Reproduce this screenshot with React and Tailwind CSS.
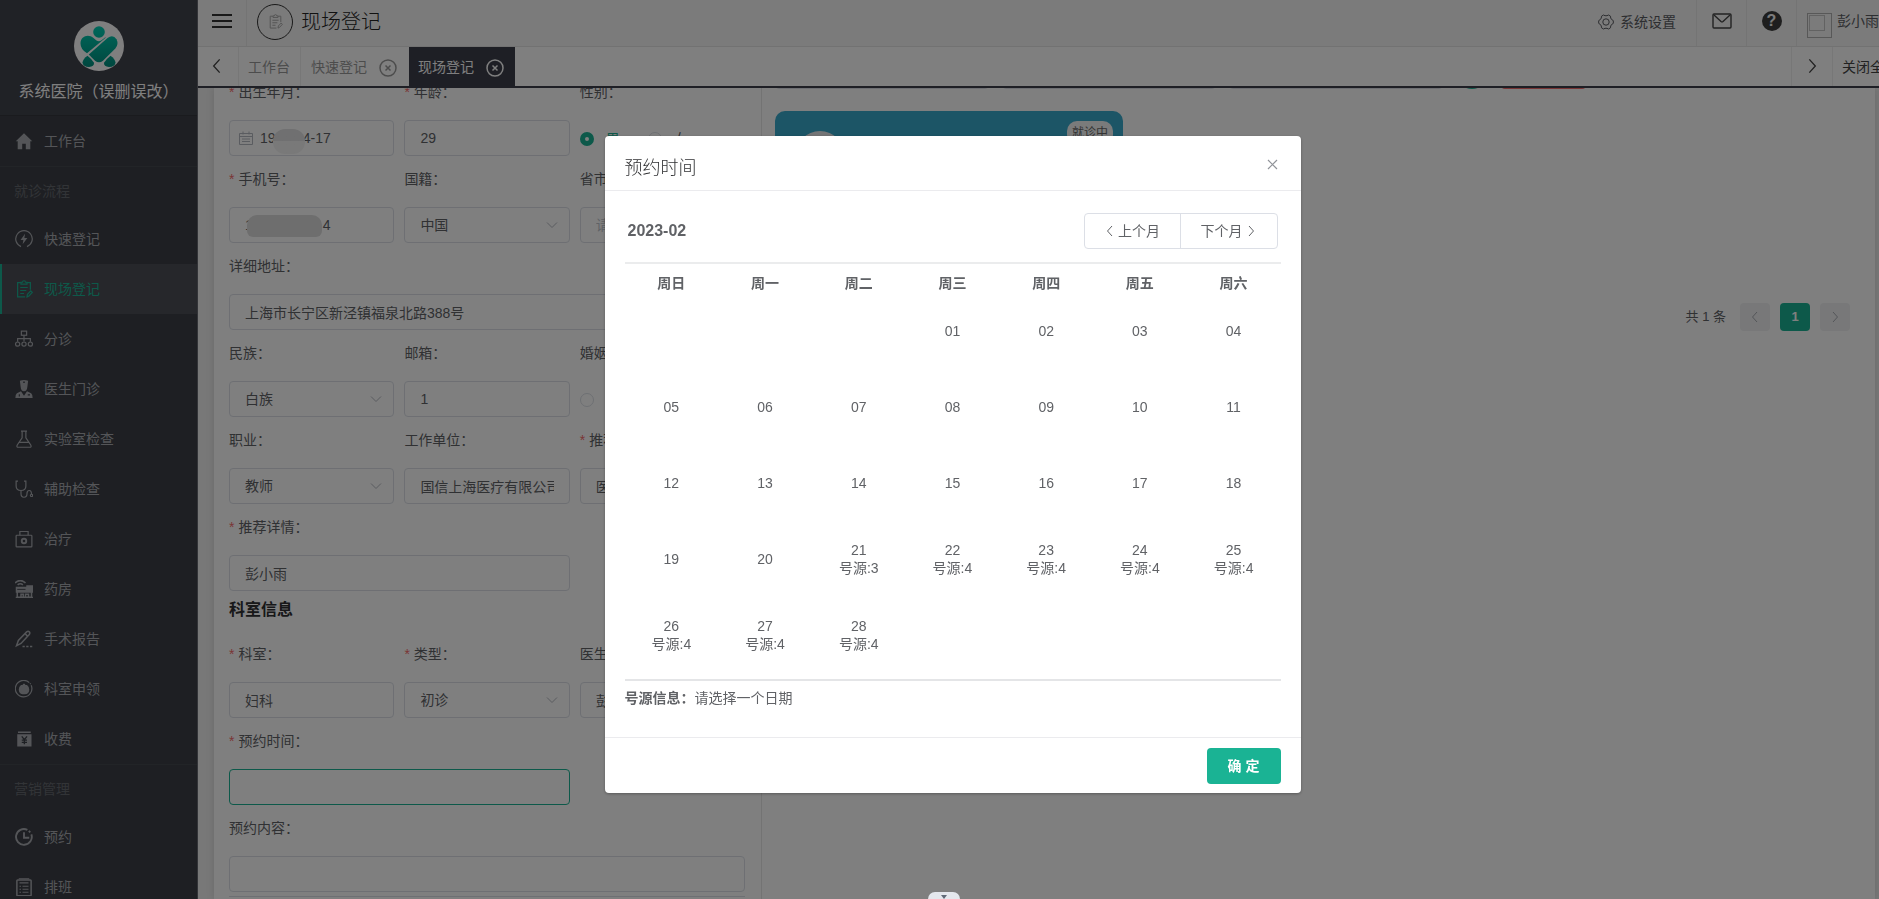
import { useState } from 'react';

const GROUPS = [
  { title: '', items: [{ label: '工作台', icon: 'home' }] },
  {
    title: '就诊流程',
    items: [
      { label: '快速登记', icon: 'bolt' },
      { label: '现场登记', icon: 'clipboard' },
      { label: '分诊', icon: 'tree' },
      { label: '医生门诊', icon: 'doctor' },
      { label: '实验室检查', icon: 'flask' },
      { label: '辅助检查', icon: 'stethoscope' },
      { label: '治疗', icon: 'kit' },
      { label: '药房', icon: 'pharmacy' },
      { label: '手术报告', icon: 'pen' },
      { label: '科室申领', icon: 'apply' },
      { label: '收费', icon: 'fee' },
    ],
  },
  {
    title: '营销管理',
    items: [
      { label: '预约', icon: 'clock' },
      { label: '排班', icon: 'schedule' },
    ],
  },
];

const WEEKDAYS = ['周日', '周一', '周二', '周三', '周四', '周五', '周六'];

const WEEKS = [
  ['', '', '', '01', '02', '03', '04'],
  ['05', '06', '07', '08', '09', '10', '11'],
  ['12', '13', '14', '15', '16', '17', '18'],
  ['19', '20', '21', '22', '23', '24', '25'],
  ['26', '27', '28', '', '', '', ''],
];

const SLOTS = { 21: 3, 22: 4, 23: 4, 24: 4, 25: 4, 26: 4, 27: 4, 28: 4 };

const ICONS = {
  home: <path fill="currentColor" stroke="none" d="M12 1.5 1 12.2h2.6V23h6v-7.2h4.8V23h6V12.2H23z" />,
  bolt: (
    <>
      <path d="M8 22.2A11 11 0 1 1 16 22.2M3.5 18.5a11 11 0 0 0 2 2" />
      <path fill="currentColor" stroke="none" d="m13.4 5-6 8.2h3.8L10.2 19l6.3-8.4h-4z" />
    </>
  ),
  clipboard: (
    <>
      <path d="M8 3.5H3.5v19h10M16 3.5h4.5V13" />
      <path d="M8 5.5h8V3h-2a2 2 0 0 0-4 0H8zM7 10h10M7 14h8M7 18h5" />
      <path d="m16 22.5.6-3.4 4.4-4.6 2 2-4.4 4.8z" />
    </>
  ),
  tree: (
    <>
      <rect x="8.5" y="1.5" width="7" height="5.5" />
      <path d="M12 7v8M3.5 15.500v-4h17v4" />
      <circle cx="3.500" cy="18.800" r="2.800" />
      <circle cx="12" cy="18.800" r="2.800" />
      <circle cx="20.500" cy="18.800" r="2.800" />
    </>
  ),
  doctor: (
    <g fill="currentColor" stroke="none">
      <path d="M6.500 1Q12-.8 17.500 1l-1 8q-.5 6-4.500 6T7.500 9z" />
      <path d="M8 15 2.500 17.500Q.5 19 .5 24h23q0-5-2-6.500L16 15l-4 6z" />
      <path fill="#3d4048" d="M11 2h2v2h-2zM5 19h1.500v3H5zM17 19h3v1.500h-3z" />
    </g>
  ),
  flask: <path d="M8 1.500h8M9.500 1.500v9L3 20q-1.500 3 1.500 3h15q3 0 1.500-3l-6.500-9.500v-9M6.500 16.500h11" />,
  stethoscope: (
    <>
      <path d="M4 1.500H1.500V8q0 6 6.500 6t6.500-6V1.500H12" />
      <path d="M8 14v4q0 5 4 5t4-5q0-4 3-4t3 5" />
      <circle cx="22" cy="20.500" r="1.500" />
    </>
  ),
  kit: (
    <>
      <rect x="1.500" y="7" width="21" height="15.500" rx="1" />
      <path d="M6.500 7V2h11v5" />
      <circle cx="12" cy="14.700" r="3" strokeWidth="2.500" />
    </>
  ),
  pharmacy: (
    <>
      <path d="M0 4Q7-2.500 14 4M3.500 6.500q3.500-3 7 0" strokeWidth="2.200" />
      <path fill="currentColor" stroke="none" d="M1 9h14V7h9v10H1z" />
      <path d="M3 16v7h19v-7M8 23v-4h3v4M14 23v-4h4v4M1 23.200h23" strokeWidth="2" />
      <path stroke="#3d4048" d="M3 12.500h11" strokeWidth="1.200" />
    </>
  ),
  pen: (
    <>
      <path d="m2 21 2.500-7L15.500 2.500q2-1.500 3.500 0t0 3.500L8 18zM13.500 5l3.500 3.500" strokeWidth="2" />
      <path d="M10 22h3M15 22h3M20 22h3" strokeWidth="2" />
    </>
  ),
  apply: (
    <>
      <path d="M19 3.500A11 11 0 1 0 21.500 7M20 4.500l1 1" />
      <path fill="currentColor" stroke="none" d="M8 6.500h2l1-1.500h2l1 1.500h2q3 2 3 6 0 6-6 6.500h-3q-5-1-5-6.500 0-4 3-6z" />
    </>
  ),
  fee: (
    <>
      <path fill="currentColor" stroke="none" d="M4 2h17v2H4zM3 5.500h19V22H3z" />
      <path stroke="#3d4048" strokeWidth="1.800" d="m9 8.500 3.500 4.500L16 8.500M12.500 13v6M9 13.500h7M9 16.500h7" />
    </>
  ),
  clock: (
    <>
      <path d="M16.500 2.500A10.500 10.500 0 1 0 21.800 8.500M18.500 3.800l1.800 2" strokeWidth="2.500" />
      <path d="M12 5.500V13h7" strokeWidth="2.500" />
    </>
  ),
  schedule: (
    <>
      <rect x="2.500" y="2.500" width="19" height="21" rx="1" strokeWidth="2" />
      <path d="M5 1h14M6 6.500h12" />
      <path d="M6 11h2M10 11h8M6 15h2M10 15h8M6 19h2M10 19h8" />
    </>
  ),
};

function Icon({ name, className }) {
  return (
    <svg viewBox="0 0 24 24" className={className} fill="none" stroke="currentColor" strokeWidth="1.6" aria-hidden="true">
      {ICONS[name]}
    </svg>
  );
}

function Chevron({ dir, className }) {
  const paths = { left: 'M16 2 7 12l9 10', right: 'm8 2 9 10-9 10', down: 'm2 7 10 10L22 7' };
  return (
    <svg viewBox="0 0 24 24" className={className} fill="none" stroke="currentColor" strokeWidth="2" aria-hidden="true">
      <path d={paths[dir]} />
    </svg>
  );
}

function Logo() {
  return (
    <svg viewBox="0 0 50 50" className="h-[50px] w-[50px]" aria-hidden="true">
      <defs>
        <linearGradient id="logo-fill" gradientUnits="userSpaceOnUse" x1="0" y1="5" x2="0" y2="46">
          <stop offset="0" stopColor="#00d0b6" />
          <stop offset="1" stopColor="#008f7e" />
        </linearGradient>
      </defs>
      <circle cx="25" cy="25" r="25" fill="#fff" />
      <g fill="url(#logo-fill)">
        <circle cx="25" cy="11" r="5.800" />
        <path d="M6.500 22.500c0-7.500 8-10 13-5.500l3 2.600q2.500 1.600 5-.4l3.500-2.700q1.500-.8.300.5L13 32.300q-6.500-4-6.500-9.800z" />
        <path d="M14.800 33.500 33.500 17q5.500-4 9 1.200 2.500 5-1.200 9.300L29 39.700q-4 3.300-8 0z" />
        <path d="M13.500 34.800q4.500 3.500 6.500 7 .3 4-5 4.200-6-.2-6.500-4.500.5-3.500 5-6.700z" />
        <path d="M36.500 34.800q-4.500 3.500-6.500 7-.3 4 5 4.200 6-.2 6.500-4.500-.5-3.500-5-6.700z" />
      </g>
    </svg>
  );
}

function Sidebar() {
  return (
    <aside className="w-[198px] shrink-0 overflow-hidden border-r border-[#666870] bg-[#3c3f46] text-[#a9abb1]">
      <div className="flex h-[116px] flex-col items-center border-b border-[#34373d] bg-[#41444c] pt-[21px]">
        <Logo />
        <div className="mt-[9px] text-base leading-6 whitespace-nowrap text-white">系统医院（误删误改）</div>
      </div>
      <nav>
        {GROUPS.map((group) => (
          <div key={group.title}>
            {group.title && (
              <div className="flex h-12 items-center border-t border-[#45484f] pl-[14px] text-sm text-[#65686f]">
                {group.title}
              </div>
            )}
            {group.items.map((item) => {
              const active = item.label === '现场登记';
              return (
                <a
                  key={item.label}
                  href="#"
                  className={
                    active
                      ? 'flex h-[50px] items-center gap-[11px] border-l-2 border-[#1ab394] bg-[#4c4f56] pl-[13px] text-sm text-[#1ab394]'
                      : 'flex h-[50px] items-center gap-[11px] pl-[15px] text-sm'
                  }
                >
                  <Icon name={item.icon} className="h-[18px] w-[18px]" />
                  {item.label}
                </a>
              );
            })}
          </div>
        ))}
      </nav>
    </aside>
  );
}

function Header() {
  return (
    <header className="flex h-[47px] border-b border-[#e4e4e4] bg-[#f6f6f6] text-sm text-[#5a5c62]">
      <button type="button" aria-label="菜单" className="flex w-[49px] items-center justify-center border-r border-[#e9e9e9] pb-[5px]">
        <svg viewBox="0 0 20 14" className="h-[14px] w-5" stroke="#333" strokeWidth="2">
          <path d="M0 1h20M0 7h20M0 13h20" />
        </svg>
      </button>
      <div className="flex flex-1 items-center gap-2 pb-[3px] pl-[10px]">
        <span className="flex h-9 w-9 items-center justify-center rounded-full border border-[#333] text-[#aaa]">
          <Icon name="clipboard" className="h-[15px] w-[15px]" />
        </span>
        <h1 className="text-xl font-light text-[#222]">现场登记</h1>
      </div>
      <a href="#" className="flex items-center gap-[6px] border-r border-[#e9e9e9] pr-5 pb-[3px]">
        <svg viewBox="0 0 16 16" className="h-4 w-4" fill="none" stroke="currentColor" aria-hidden="true">
          <path d="M5.500 1 7 1.700h2l1.500-.7 2 1.200.2 1.800 1 1.600 1.600 1v2.800l-1.600 1-1 1.600-.2 1.800-2 1.200-1.500-.7H7L5.500 15l-2-1.200-.2-1.800-1-1.600-1.600-1V6.600l1.600-1 1-1.600.2-1.800z" />
          <circle cx="8" cy="8" r="3.200" />
        </svg>
        系统设置
      </a>
      <button type="button" aria-label="消息" className="flex w-[50px] items-center justify-center border-r border-[#e9e9e9] pb-1">
        <svg viewBox="0 0 20 16" className="h-4 w-5" fill="none" stroke="#444" strokeWidth="1.400">
          <rect x="1" y="1" width="18" height="14" rx="1" />
          <path d="m2 2 7 6.500q1 .8 2 0L18 2" />
        </svg>
      </button>
      <button type="button" aria-label="帮助" className="flex w-[50px] items-center justify-center border-r border-[#e9e9e9] pb-[5px]">
        <span className="flex h-5 w-5 items-center justify-center rounded-full bg-[#3c3c3c] text-base leading-5 font-bold text-[#f6f6f6]">?</span>
      </button>
      <a href="#" className="flex w-[82px] gap-[5px] overflow-hidden pt-[11px] pl-[10px] leading-5 whitespace-nowrap">
        <span className="mt-[2px] h-[25px] w-[25px] shrink-0 border border-[#b0b0b0] p-px">
          <span className="block h-4 w-4 border border-[#c4c4c4]" />
        </span>
        彭小雨
      </a>
    </header>
  );
}

function CloseMark() {
  return (
    <svg viewBox="0 0 18 18" className="h-[18px] w-[18px]" fill="none" stroke="currentColor" strokeWidth="1.500">
      <circle cx="9" cy="9" r="8" />
      <path d="m6.500 6.500 5 5M11.500 6.500l-5 5" />
    </svg>
  );
}

function TabBar() {
  return (
    <div className="flex h-[41px] border-b-2 border-[#3c3f4a] bg-white text-sm text-[#999]">
      <button type="button" aria-label="向左" className="flex w-[41px] items-center justify-center border-r border-[#eee] pr-[3px] pb-[2px] text-[#444]">
        <Chevron dir="left" className="h-4 w-4" />
      </button>
      <a href="#" className="flex items-center border-r border-[#eee] pr-[10px] pl-[9px]">工作台</a>
      <span className="flex items-center gap-3 pr-3 pl-[10px]">
        <a href="#">快速登记</a>
        <button type="button" aria-label="关闭快速登记" className="pt-[2px]"><CloseMark /></button>
      </span>
      <span className="flex items-center gap-3 bg-[#3c3f4a] pr-[11px] pl-[9px] text-white">
        <a href="#">现场登记</a>
        <button type="button" aria-label="关闭现场登记" className="pt-[2px]"><CloseMark /></button>
      </span>
      <div className="flex-1" />
      <button type="button" aria-label="向右" className="flex w-[42px] items-center justify-center border-x border-[#eee] pb-[2px] text-[#444]">
        <Chevron dir="right" className="h-4 w-4" />
      </button>
      <button type="button" className="w-[46px] overflow-hidden pl-[9px] text-left whitespace-nowrap text-[#444]">关闭全部</button>
    </div>
  );
}

function FieldLabel({ htmlFor, required, children }) {
  return (
    <label htmlFor={htmlFor} className="flex h-[51px] items-center pb-[5px] whitespace-nowrap">
      {required && <span className="mr-1 text-[#f56c6c]">*</span>}
      {children}
    </label>
  );
}

function TextField({ id, label, required, value = '', placeholder, span = '', focus, children }) {
  return (
    <div className={span}>
      <FieldLabel htmlFor={id} required={required}>{label}</FieldLabel>
      <div className="relative">
        <input
          id={id}
          defaultValue={value}
          placeholder={placeholder}
          className={
            focus
              ? 'block h-9 w-full rounded border border-[#1ab394] bg-white px-[15px] outline-none'
              : 'block h-9 w-full rounded border border-[#dcdfe6] bg-white px-[15px] outline-none placeholder:text-[#c0c4cc] has-[+svg]:pl-[30px]'
          }
        />
        {children}
      </div>
    </div>
  );
}

function SelectField({ id, label, required, value }) {
  return (
    <div>
      <FieldLabel htmlFor={id} required={required}>{label}</FieldLabel>
      <div className="relative">
        <select id={id} className="block h-9 w-full appearance-none rounded border border-[#dcdfe6] bg-white px-[15px] outline-none">
          <option>{value}</option>
        </select>
        <Chevron dir="down" className="pointer-events-none absolute top-3 right-3 h-3 w-3 text-[#b4b8c0]" />
      </div>
    </div>
  );
}

function RadioField({ label, name, options, checked }) {
  return (
    <fieldset>
      <legend className="flex h-[51px] items-center pb-[5px]">{label}</legend>
      <div className="flex h-9 items-center gap-7 pt-[2px] whitespace-nowrap">
        {options.map((option) => (
          <label key={option} className={option === checked ? 'flex items-center gap-3 text-[#1ab394]' : 'flex items-center gap-3'}>
            <input
              type="radio"
              name={name}
              defaultChecked={option === checked}
              className="h-[14px] w-[14px] appearance-none rounded-full border border-[#dcdfe6] bg-white checked:border-[5px] checked:border-[#1ab394]"
            />
            {option}
          </label>
        ))}
      </div>
    </fieldset>
  );
}

function RegisterForm() {
  return (
    <form className="-mt-[19px] w-[33%] border-r border-[#e6e6e6] pr-4 pl-[15px] text-sm text-[#606266]">
      <div className="grid grid-cols-3 gap-x-[10px]">
        <TextField id="birth" label="出生年月：" required value={'19' + '\u00a0'.repeat(7) + '4-17'}>
          <svg viewBox="0 0 14 14" className="absolute top-[11px] left-[10px] h-[14px] w-[14px]" fill="none" stroke="#b4b8c0" aria-hidden="true">
            <path d="M.5 2.500h13v11H.5zM.5 5.500h13M4 .5v3M10 .5v3M3 8h8M3 10.500h8" />
          </svg>
          <span className="absolute top-[9px] left-11 h-[25px] w-8 rounded-[12px] bg-linear-to-b from-[#e0e0e2] from-50% to-[#f2f2f2] to-50%" />
        </TextField>
        <TextField id="age" label="年龄：" required value="29" />
        <RadioField label="性别：" name="sex" options={['男', '女']} checked="男" />

        <TextField id="phone" label="手机号：" required value={'1' + '\u00a0'.repeat(18) + '4'}>
          <span className="absolute top-2 left-[18px] h-[22px] w-[75px] rounded-t-[10px] rounded-b-md bg-[#dddddd]" />
        </TextField>
        <SelectField id="country" label="国籍：" value="中国" />
        <TextField id="city" label="省市区：" placeholder="请选择" />

        <TextField id="address" label="详细地址：" value="上海市长宁区新泾镇福泉北路388号" span="col-span-3" />

        <SelectField id="nation" label="民族：" value="白族" />
        <TextField id="email" label="邮箱：" value="1" />
        <RadioField label="婚姻：" name="marriage" options={['已婚', '未婚']} />

        <SelectField id="job" label="职业：" value="教师" />
        <TextField id="company" label="工作单位：" value="国信上海医疗有限公司" />
        <TextField id="source" label="推荐来源：" required value="医生推荐" />

        <TextField id="detail" label="推荐详情：" required value="彭小雨" span="col-span-2" />
      </div>
      <h2 className="flex h-10 items-center pb-[2px] text-base font-bold text-[#303133]">科室信息</h2>
      <div className="grid grid-cols-3 gap-x-[10px]">
        <TextField id="dept" label="科室：" required value="妇科" />
        <SelectField id="type" label="类型：" required value="初诊" />
        <TextField id="doctor" label="医生：" value="彭小雨" />
        <TextField id="time" label="预约时间：" required span="col-span-2" focus />
        <TextField id="content" label="预约内容：" span="col-span-3" />
      </div>
      <div className="mt-1 h-9 border-t border-[#dcdfe6]" />
    </form>
  );
}

function PatientPanel() {
  return (
    <section className="min-w-0 flex-1 pr-[25px] pl-[13px] text-sm text-[#606266]">
      <div className="-mt-[35px] flex h-9 gap-[13px]">
        <input aria-label="姓名" className="w-[214px] rounded border border-[#dcdfe6]" />
        <input aria-label="电话" className="w-[214px] rounded border border-[#dcdfe6]" />
        <input aria-label="证件号" className="w-[214px] rounded border border-[#dcdfe6]" />
        <button type="button" aria-label="查询" className="h-9 w-8 rounded-full bg-[#1ab394]" />
        <button type="button" aria-label="重置" className="h-9 w-[85px] rounded bg-[#f56c6c]" />
      </div>
      <div className="mt-[22px] flex h-40 w-[348px] justify-between rounded-[10px] bg-[#38aacc] pr-[10px] pl-5">
        <span className="mt-5 h-[50px] w-[50px] rounded-full bg-[#e8eaec]" />
        <span className="mt-[10px] h-6 rounded-[10px] bg-[#f4f6f7] px-[5px] text-xs leading-6 text-[#666]">就诊中</span>
      </div>
      <div className="mt-8 flex items-center justify-end gap-[10px] text-[13px]">
        <span className="mr-1">共 1 条</span>
        <button type="button" aria-label="上一页" className="flex h-7 w-[30px] items-center justify-center rounded-sm bg-[#f0f1f3] text-[#a8abb2]">
          <Chevron dir="left" className="h-3 w-3" />
        </button>
        <button type="button" className="h-7 w-[30px] rounded-sm bg-[#1ab394] font-bold text-white">1</button>
        <button type="button" aria-label="下一页" className="flex h-7 w-[30px] items-center justify-center rounded-sm bg-[#f0f1f3] text-[#a8abb2]">
          <Chevron dir="right" className="h-3 w-3" />
        </button>
      </div>
    </section>
  );
}

function AppointmentDialog() {
  const [selected, setSelected] = useState('');

  return (
    <div role="dialog" aria-label="预约时间" className="w-[696px] self-start rounded-sm bg-white text-sm text-[#606266] shadow-[0_1px_3px_rgba(0,0,0,0.3)]">
      <div className="flex h-[55px] justify-between border-b border-[#ebebee] pt-[18px] pr-[23px] pl-5">
        <h2 className="text-lg leading-7 font-light text-[#303133]">预约时间</h2>
        <button type="button" aria-label="关闭" className="flex h-5 items-center">
          <svg viewBox="0 0 11 11" className="h-[11px] w-[11px]" stroke="#909399" strokeWidth="1.200">
            <path d="m1 1 9 9M10 1l-9 9" />
          </svg>
        </button>
      </div>
      <div className="px-5 pt-[22px] pb-[29px]">
        <div className="flex items-center justify-between px-[3px]">
          <span className="text-base font-bold">2023-02</span>
          <div className="flex h-9 divide-x divide-[#dcdfe6] rounded border border-[#dcdfe6]">
            <button type="button" className="flex w-24 items-center justify-center gap-[2px]">
              <Chevron dir="left" className="h-3 w-3" />
              上个月
            </button>
            <button type="button" className="flex w-24 items-center justify-center gap-[2px]">
              下个月
              <Chevron dir="right" className="h-3 w-3" />
            </button>
          </div>
        </div>
        <div className="mt-[13px] border-t-2 border-[#ebeced]" />
        <table className="mt-[9px] w-full table-fixed text-center">
          <thead>
            <tr className="h-5">
              {WEEKDAYS.map((day) => (
                <th key={day} className="p-0 leading-5">{day}</th>
              ))}
            </tr>
          </thead>
          <tbody>
            {WEEKS.map((week, row) => (
              <tr key={row} className="h-[76px]">
                {week.map((day, col) => (
                  <td key={col} className="p-0">
                    {day && (
                      <button
                        type="button"
                        onClick={() => setSelected(day)}
                        className={selected === day ? 'mx-auto block leading-[18px] text-[#1ab394]' : 'mx-auto block leading-[18px]'}
                      >
                        {day}
                        {SLOTS[day] && <span className="block">号源:{SLOTS[day]}</span>}
                      </button>
                    )}
                  </td>
                ))}
              </tr>
            ))}
          </tbody>
        </table>
        <div className="mt-[6px] border-t-2 border-[#e4e5e7]" />
        <p className="mt-[7px] leading-5">
          <span className="font-bold">号源信息：</span>
          {selected ? `2023-02-${selected}` : '请选择一个日期'}
        </p>
      </div>
      <div className="flex justify-end border-t border-[#ebebee] px-5 pt-[10px] pb-[9px]">
        <button type="button" className="h-9 rounded bg-[#1ab394] px-[21px] font-bold text-white">确 定</button>
      </div>
    </div>
  );
}

export default function App() {
  return (
    <div className="flex h-screen overflow-hidden bg-[#f0f0f0] font-['Liberation_Sans','Noto_Sans_CJK_SC',sans-serif]">
      <Sidebar />
      <div className="flex min-w-0 flex-1 flex-col">
        <Header />
        <TabBar />
        <main className="flex min-h-0 flex-1 overflow-hidden pr-1 pl-4">
          <div className="flex min-w-0 flex-1 bg-white shadow-[0_0_8px_rgba(0,0,0,0.12)]">
            <RegisterForm />
            <PatientPanel />
          </div>
        </main>
      </div>
      <div className="fixed inset-0 flex justify-center bg-black/50 pt-[136px] pl-[26px]">
        <AppointmentDialog />
      </div>
      <div className="fixed inset-x-0 bottom-0 flex justify-center pl-2">
        <button type="button" aria-label="展开" className="flex h-[7px] w-8 justify-center rounded-t-lg bg-[#e4e7ed] pt-[3px]">
          <svg viewBox="0 0 6 4" className="h-1 w-[6px]" fill="#606a78">
            <path d="M0 0h6L3 4z" />
          </svg>
        </button>
      </div>
    </div>
  );
}
